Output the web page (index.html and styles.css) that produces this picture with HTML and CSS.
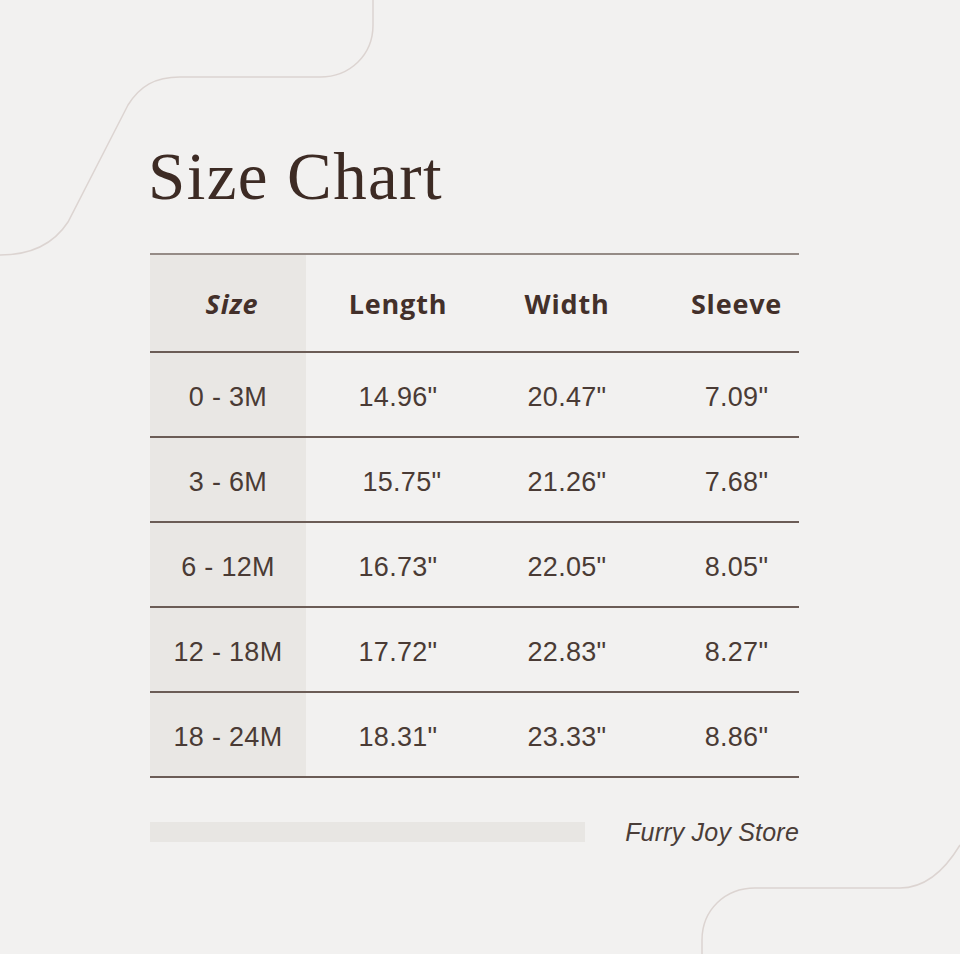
FILE: index.html
```html
<!DOCTYPE html>
<html lang="en">
<head>
<meta charset="utf-8">
<title>Size Chart</title>
<link rel="stylesheet" href="styles.css">
</head>
<body>
<div class="page">
  <svg class="deco" width="960" height="954" viewBox="0 0 960 954" aria-hidden="true">
    <path d="M0,255 C35,255 55,242 68,222 L128,105 C140,86 155,77 180,77 L320,77 C350,77 373,55 373,25 L373,0" />
    <path d="M702,954 L702,940 C702,910 725,888 755,888 L900,888 C925,888 945,870 960,845" />
  </svg>
  <main class="content">
    <h1 class="title">Size Chart</h1>
    <div class="chart">
      <div class="row head">
        <div class="cell first"><em>Size</em></div>
        <div class="cell">Length</div>
        <div class="cell">Width</div>
        <div class="cell last">Sleeve</div>
      </div>
      <div class="row">
        <div class="cell first">0 - 3M</div>
        <div class="cell">14.96"</div>
        <div class="cell">20.47"</div>
        <div class="cell last">7.09"</div>
      </div>
      <div class="row">
        <div class="cell first">3 - 6M</div>
        <div class="cell">&nbsp;15.75"</div>
        <div class="cell">21.26"</div>
        <div class="cell last">7.68"</div>
      </div>
      <div class="row">
        <div class="cell first">6 - 12M</div>
        <div class="cell">16.73"</div>
        <div class="cell">22.05"</div>
        <div class="cell last">8.05"</div>
      </div>
      <div class="row">
        <div class="cell first">12 - 18M</div>
        <div class="cell">17.72"</div>
        <div class="cell">22.83"</div>
        <div class="cell last">8.27"</div>
      </div>
      <div class="row">
        <div class="cell first">18 - 24M</div>
        <div class="cell">18.31"</div>
        <div class="cell">23.33"</div>
        <div class="cell last">8.86"</div>
      </div>
    </div>
    <div class="footer">
      <div class="bar"></div>
      <div class="store">Furry Joy Store</div>
    </div>
  </main>
</div>
</body>
</html>
```
FILE: styles.css
```css
html, body {
  margin: 0;
  padding: 0;
}
body {
  background: #f2f1f0;
  color: #3f2f29;
  font-family: "Liberation Sans", Arial, sans-serif;
}
.page {
  position: relative;
  width: 960px;
  height: 954px;
  overflow: hidden;
}
.deco {
  position: absolute;
  left: 0;
  top: 0;
  fill: none;
  stroke: #dcd4d1;
  stroke-width: 1.5;
}
.content {
  position: relative;
  padding: 143px 161px 0 150px;
}
.title {
  margin: 0 0 44px -2px;
  font-family: "Liberation Serif", serif;
  font-weight: 400;
  font-size: 67px;
  line-height: 66px;
  letter-spacing: 1.4px;
  color: #3d2b24;
}
.chart {
  width: 649px;
  border-bottom: 2px solid #6b5c56;
}
.row {
  display: grid;
  grid-template-columns: 156px 184px 154px 155px;
  height: 85px;
  box-sizing: border-box;
  border-top: 2px solid #6b5c56;
}
.row.head {
  height: 98px;
  border-top-color: #958b86;
}
.cell {
  display: flex;
  align-items: center;
  justify-content: center;
  padding-top: 5px;
  font-size: 27px;
  letter-spacing: 0.3px;
  color: #4a3b35;
}
.head .cell {
  padding-top: 0;
  font-family: "Open Sans", sans-serif;
  font-weight: 700;
  font-size: 27px;
  letter-spacing: 0.8px;
  color: #43302a;
}
.cell.first {
  background: #e9e7e4;
}
.cell.last {
  padding-left: 30px;
}
.head .cell.first em {
  padding-left: 8px;
}
.footer {
  display: flex;
  align-items: center;
  justify-content: space-between;
  width: 649px;
  margin-top: 42px;
}
.bar {
  width: 435px;
  height: 20px;
  background: #e8e6e3;
}
.store {
  font-style: italic;
  font-size: 25px;
  line-height: 24px;
  letter-spacing: 0.2px;
  color: #4a3d38;
}
```
